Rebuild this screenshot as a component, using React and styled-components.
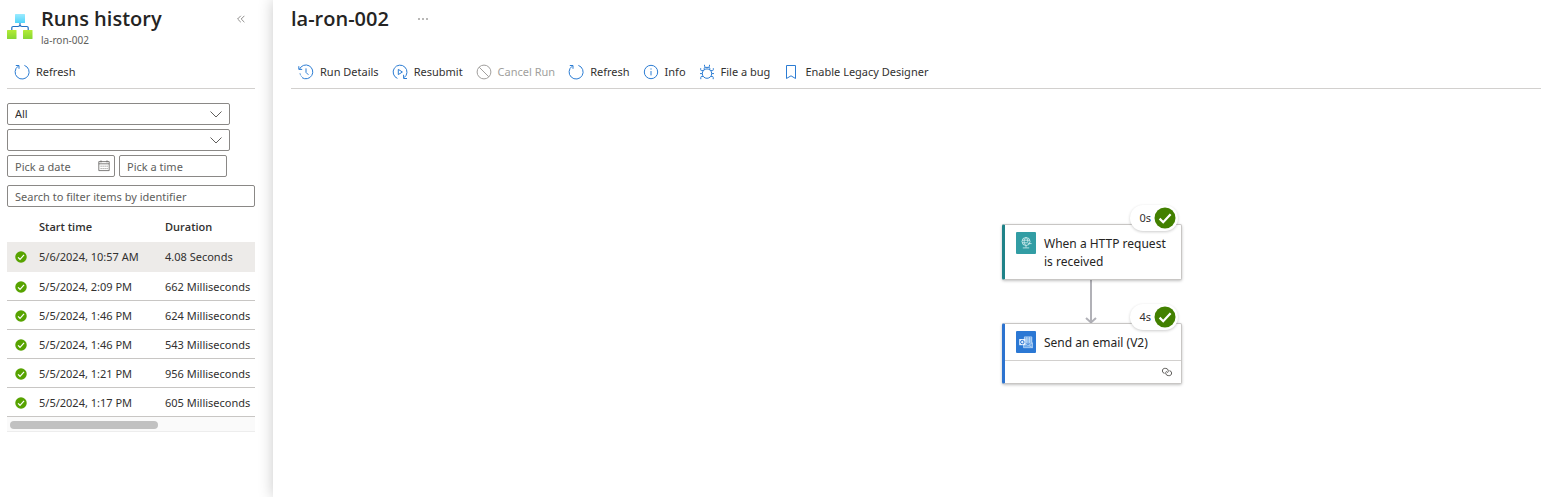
import React from 'react'
import styled, { createGlobalStyle } from 'styled-components'


const GlobalStyle = createGlobalStyle`
    *, *::before, *::after {
        box-sizing: border-box;
    }

    body {
        margin: 0;
        background: #fff;
        color: #323130;
        font-family: "Noto Sans", "Open Sans", sans-serif;
        font-size: 11px;
        line-height: 16px;
    }

    button, input, select {
        font: inherit;
        color: inherit;
    }
`

const Page = styled.div`
    display: flex;
    min-height: 100vh;
    overflow: hidden;
`

const Sidebar = styled.aside`
    flex: 0 0 273px;
    padding: 0 18px 0 7px;
`

const Main = styled.main`
    flex: 1;
    min-width: 0;
    display: flex;
    flex-direction: column;
    padding-left: 18px;
    background: #fff;
    box-shadow: 0 0 14px rgba(0, 0, 0, 0.22);
`

const Header = styled.header`
    display: flex;
    align-items: flex-start;
    gap: ${({ $gap }) => $gap}px;
    height: 56px;
    padding-top: 5px;
`

const Logo = styled.svg`
    flex: none;
    width: 26px;
    height: 26px;
    margin-top: 8px;
`

const Heading = styled.div`
    flex: ${({ $grow }) => ($grow ? 1 : 'none')};
`

const Title = styled.h1`
    margin: 0;
    font-family: "Open Sans", sans-serif;
    font-size: 20px;
    font-weight: 600;
    line-height: 28px;
    color: #252423;
    white-space: nowrap;
`

const Subtitle = styled.div`
    font-size: 10px;
    line-height: 14px;
    color: #605e5c;
`

const IconButton = styled.button`
    display: flex;
    align-items: center;
    justify-content: center;
    width: 28px;
    height: 28px;
    padding: 0;
    border: 0;
    background: none;
    color: #605e5c;
    cursor: pointer;
`

const Toolbar = styled.div`
    display: flex;
    align-items: center;
    gap: 13px;
    height: 33px;
    padding: 0 7px;
    border-bottom: 1px solid #d2d0ce;
`

const Command = styled.button`
    display: flex;
    align-items: center;
    gap: 6px;
    padding: 0;
    border: 0;
    background: none;
    white-space: nowrap;
    cursor: pointer;

    svg {
        color: #2b7cd3;
    }

    &:disabled {
        color: #a19f9d;
        cursor: default;

        svg {
            color: #a19f9d;
        }
    }
`

const Filters = styled.form`
    display: flex;
    flex-direction: column;
    gap: 4px;
    padding-top: 14px;
`

const FilterRow = styled.div`
    display: flex;
    gap: 4px;
`

const Field = styled.label`
    display: flex;
    align-items: center;
    width: ${({ $width }) => $width};
    height: 22px;
    margin-top: ${({ $spaced }) => ($spaced ? 4 : 0)}px;
    padding-right: ${({ $icon }) => ($icon ? 4 : 0)}px;
    border: 1px solid #8a8886;
    border-radius: 2px;
    color: #605e5c;
`

const Input = styled.input`
    flex: 1;
    min-width: 0;
    height: 20px;
    padding: 0 7px;
    border: 0;
    background: none;
    outline: none;

    &::placeholder {
        color: #605e5c;
        opacity: 1;
    }
`

const Select = styled.select`
    flex: 1;
    min-width: 0;
    height: 20px;
    padding: 0 7px;
    border: 0;
    appearance: none;
    background: none;
    color: #323130;
    outline: none;
`

const Chevron = styled.svg`
    flex: none;
    width: 14px;
    height: 14px;
    margin-right: 6px;
`

const Table = styled.table`
    width: 100%;
    margin-top: 6px;
    border-collapse: collapse;
    table-layout: fixed;
    white-space: nowrap;

    th {
        height: 29px;
        padding: 0 0 2px;
        font-family: "Open Sans", sans-serif;
        font-weight: 600;
        text-align: left;
    }

    td {
        height: 29px;
        padding: 2px 0 0;
    }
`

const Col = styled.col`
    width: ${({ $width }) => $width};
`

const Run = styled.tr`
    background: ${({ $selected }) => ($selected ? '#edebe9' : 'none')};
    border-bottom: 1px solid ${({ $selected }) => ($selected ? '#edebe9' : '#c8c6c4')};
`

const StatusIcon = styled.svg`
    display: block;
    width: 12px;
    height: 12px;
    margin-left: 8px;
`

const ScrollTrack = styled.div`
    height: 15px;
    padding: 4px 3px;
    background: #fafafa;
    border-bottom: 1px solid #ededed;
`

const ScrollThumb = styled.div`
    width: 61%;
    height: 8px;
    border-radius: 4px;
    background: #c1c1c1;
`

const Canvas = styled.div`
    position: relative;
    flex: 1;
    min-height: 320px;
`

const Edge = styled.svg`
    position: absolute;
    left: ${({ $x }) => $x}px;
    top: ${({ $y }) => $y}px;
    width: 12px;
    height: 44px;
`

const Node = styled.article`
    position: absolute;
    left: ${({ $x }) => $x}px;
    top: ${({ $y }) => $y}px;
    width: 180px;
    border: 1px solid #c8c6c4;
    border-left: 3px solid ${({ $color }) => $color};
    border-radius: 2px;
    background: #fff;
    box-shadow: 0 1px 3px rgba(0, 0, 0, 0.25);
`

const NodeBody = styled.div`
    display: flex;
    gap: 8px;
    padding: ${({ $compact }) => ($compact ? '7px 11px' : '7px 11px 8px')};
`

const NodeIcon = styled.svg`
    flex: none;
    width: 20px;
    height: 22px;
    border-radius: 1px;
    background: ${({ $color }) => $color};
`

const NodeTitle = styled.h2`
    margin: 0;
    padding-top: 3px;
    font-size: 12px;
    font-weight: 400;
    line-height: 18px;
    color: #252423;
`

const NodeFooter = styled.div`
    display: flex;
    justify-content: flex-end;
    align-items: center;
    height: 23px;
    padding-right: 8px;
    border-top: 1px solid #d2d0ce;
`

const Badge = styled.div`
    position: absolute;
    top: -20px;
    right: 3px;
    display: flex;
    align-items: center;
    justify-content: flex-end;
    gap: 3px;
    width: 48px;
    height: 26px;
    padding-right: 2px;
    border-radius: 13px;
    background: #fff;
    box-shadow: 0 1px 3px rgba(0, 0, 0, 0.2);
`


const Icon = ({ children, size = 16 }) => (
    <svg width={size} height={size} viewBox="0 0 16 16" fill="none" stroke="currentColor" aria-hidden="true">
        {children}
    </svg>
)

const RefreshIcon = () => (
    <Icon>
        <path d="M10.4 1.4A7 7 0 1 1 4.2 2.2" />
        <path d="M1.8 1.5H5V4.8" />
    </Icon>
)

const HistoryIcon = () => (
    <Icon>
        <path d="M1.6 5A6.9 6.9 0 1 1 4 13.6" />
        <path d="M2 9.4q.4 1.8 1.6 3.2" strokeDasharray="1.4 1" />
        <path d="M0.8 2.2V5.4h3.4M8 4.4V8.4l2.4 2.4" />
    </Icon>
)

const ResubmitIcon = () => (
    <Icon>
        <path d="M5.4 14.4A6.9 6.9 0 1 1 12 13.7" />
        <path d="M11.6 10.8v3.7h3.4M6.3 5.4v5.2L10.4 8z" />
    </Icon>
)

const CancelIcon = () => (
    <Icon>
        <circle cx="8" cy="8" r="6.9" />
        <path d="M3.2 3.2l9.6 9.6" />
    </Icon>
)

const InfoIcon = () => (
    <Icon>
        <circle cx="8" cy="8" r="6.7" />
        <path d="M8 7v4.4M8 4.4v1.2" />
    </Icon>
)

const BugIcon = () => (
    <Icon>
        <circle cx="8" cy="9.6" r="4.7" />
        <path d="M5.2 5.8V4.4q0-1 1-1h3.6q1 0 1 1v1.4M5.5 0.8v1.4l1.1 1.2M10.5 0.8v1.4L9.4 3.4" />
        <path d="M4.4 6.6H2.6q-.9 0-.9-.9V4.2M11.6 6.6h1.8q.9 0 .9-.9V4.2M3.3 9.6H1M12.7 9.6H15M4 12.4H2.8q-1 0-1 1v1.8M12 12.4h1.2q1 0 1 1v1.8" />
    </Icon>
)

const BookmarkIcon = () => (
    <Icon>
        <path d="M3.5 1.5h9v13L8 11.8l-4.5 2.7z" />
    </Icon>
)

const CalendarIcon = () => (
    <svg width="12" height="12" viewBox="0 0 12 12" fill="none" stroke="currentColor" strokeWidth="0.8" aria-hidden="true">
        <path d="M0.8 1.6h10.4v9H0.8zM0.8 3.8h10.4M3 0.4v2M9 0.4v2" />
        <path d="M2.6 6.2h7M2.6 8.6h7" strokeDasharray="1 1" />
    </svg>
)

const LinkIcon = () => (
    <svg width="12" height="10" viewBox="0 0 12 10" fill="none" stroke="#605e5c" aria-hidden="true">
        <path d="M3.6 6.3A2.5 2.5 0 0 1 3.2 1.4h1.6a2.5 2.5 0 0 1 1.6 4.4" />
        <path d="M8.4 3.7a2.5 2.5 0 0 1 .4 4.9H7.2A2.5 2.5 0 0 1 5.6 4.2" />
    </svg>
)

const DropdownArrow = () => (
    <Chevron viewBox="0 0 14 14" fill="none" stroke="#605e5c" aria-hidden="true">
        <path d="M1.5 4.5L7 10l5.5-5.5" />
    </Chevron>
)

const LogicAppLogo = () => (
    <Logo viewBox="0 0 26 26" aria-hidden="true">
        <defs>
            <linearGradient id="logo-top" x1="0" y1="0" x2="0" y2="1">
                <stop offset="0" stopColor="#9cebff" />
                <stop offset="1" stopColor="#50d4fa" />
            </linearGradient>
            <linearGradient id="logo-leaf" x1="0" y1="0" x2="0" y2="1">
                <stop offset="0" stopColor="#b4ec36" />
                <stop offset="1" stopColor="#86d633" />
            </linearGradient>
        </defs>
        <path d="M13 9v3.5M4.8 17v-2.2q0-1.3 1.3-1.3h4.6q1.6 0 2.3-1.6q.7 1.6 2.3 1.6h4.6q1.3 0 1.3 1.3V17" fill="none" stroke="#1f6fc5" strokeWidth="1.2" />
        <rect x="8" y="1" width="10" height="9" rx="0.5" fill="url(#logo-top)" />
        <rect x="0" y="17" width="9.5" height="9" rx="0.5" fill="url(#logo-leaf)" />
        <rect x="16" y="17" width="9.5" height="9" rx="0.5" fill="url(#logo-leaf)" />
    </Logo>
)

const CheckCircle = ({ color = '#57a300' }) => (
    <>
        <circle cx="11" cy="11" r="10.5" fill={color} />
        <path d="M5.6 11.6l3.6 3.6 7.4-8" fill="none" stroke="#fff" strokeWidth="2.2" />
    </>
)

const HttpGlyph = () => (
    <g fill="none" stroke="#d8f0f1" strokeWidth="0.8">
        <circle cx="10" cy="9.5" r="4" />
        <path d="M6.2 8.2h7.6M6.2 10.8h5.4M10 5.5c-2.4 2.4-2.4 5.6 0 8M10 5.5c1.6 1.4 2 3 1.8 5M10 13.5v2M6.8 15.9h6.4M12 11.6h3.6" />
    </g>
)

const OutlookGlyph = () => (
    <>
        <path d="M8 6h8v6H8z" fill="#5f9fe4" />
        <path d="M8.4 5.9h7.4v6.2H8.4zM10.8 6v6M13.4 6v6M8.4 8h7.4M8.4 10h7.4" fill="none" stroke="#d6e8fb" strokeWidth="0.7" />
        <path d="M7.5 11.8l4.6 2.6 4.4-2.6v4.9h-9z" fill="#72acea" stroke="#d6e8fb" strokeWidth="0.6" />
        <path d="M12.6 14.2l3.8 2.4" stroke="#d6e8fb" strokeWidth="0.6" />
        <rect x="3.2" y="8" width="6.2" height="6.2" fill="#e5f1fd" />
        <circle cx="6.3" cy="11.1" r="1.7" fill="none" stroke="#2772d2" />
    </>
)


const commands = [
    { label: 'Run Details', icon: HistoryIcon },
    { label: 'Resubmit', icon: ResubmitIcon },
    { label: 'Cancel Run', icon: CancelIcon, disabled: true },
    { label: 'Refresh', icon: RefreshIcon },
    { label: 'Info', icon: InfoIcon },
    { label: 'File a bug', icon: BugIcon },
    { label: 'Enable Legacy Designer', icon: BookmarkIcon },
]

const runs = [
    { start: '5/6/2024, 10:57 AM', duration: '4.08 Seconds' },
    { start: '5/5/2024, 2:09 PM', duration: '662 Milliseconds' },
    { start: '5/5/2024, 1:46 PM', duration: '624 Milliseconds' },
    { start: '5/5/2024, 1:46 PM', duration: '543 Milliseconds' },
    { start: '5/5/2024, 1:21 PM', duration: '956 Milliseconds' },
    { start: '5/5/2024, 1:17 PM', duration: '605 Milliseconds' },
]

const steps = [
    { title: 'When a HTTP request is received', time: '0s', x: 711, y: 135, color: '#1f8288', iconColor: '#329da4', glyph: HttpGlyph },
    { title: 'Send an email (V2)', time: '4s', x: 711, y: 234, color: '#2c73cf', iconColor: '#2b78d4', glyph: OutlookGlyph, linked: true },
]


const RunsHistory = () => (
    <Sidebar>
        <Header $gap={8}>
            <LogicAppLogo />
            <Heading $grow>
                <Title>Runs history</Title>
                <Subtitle>la-ron-002</Subtitle>
            </Heading>
            <IconButton type="button" aria-label="Collapse">
                <svg width="8" height="8" viewBox="0 0 8 8" fill="none" stroke="currentColor" strokeWidth="0.7">
                    <path d="M3.8 0.8L0.6 4l3.2 3.2M7.4 0.8L4.2 4l3.2 3.2" />
                </svg>
            </IconButton>
        </Header>
        <Toolbar>
            <Command type="button"><RefreshIcon />Refresh</Command>
        </Toolbar>

        <Filters>
            <Field $width="223px">
                <Select aria-label="Status" defaultValue="all">
                    <option value="all">All</option>
                </Select>
                <DropdownArrow />
            </Field>
            <Field $width="223px">
                <Select aria-label="Time range" defaultValue="">
                    <option value=""></option>
                </Select>
                <DropdownArrow />
            </Field>
            <FilterRow>
                <Field $width="108px" $icon>
                    <Input type="text" aria-label="Date" placeholder="Pick a date" />
                    <CalendarIcon />
                </Field>
                <Field $width="108px">
                    <Input type="text" aria-label="Time" placeholder="Pick a time" />
                </Field>
            </FilterRow>
            <Field $width="100%" $spaced>
                <Input type="text" aria-label="Search" placeholder="Search to filter items by identifier" />
            </Field>
        </Filters>

        <Table>
            <colgroup>
                <Col $width="32px" />
                <Col $width="126px" />
                <Col />
            </colgroup>
            <thead>
                <tr>
                    <th aria-label="Status" />
                    <th>Start time</th>
                    <th>Duration</th>
                </tr>
            </thead>
            <tbody>
                {runs.map((run, i) => (
                    <Run key={i} $selected={i === 0}>
                        <td>
                            <StatusIcon viewBox="0 0 22 22" role="img" aria-label="Succeeded">
                                <CheckCircle />
                            </StatusIcon>
                        </td>
                        <td>{run.start}</td>
                        <td>{run.duration}</td>
                    </Run>
                ))}
            </tbody>
        </Table>
        <ScrollTrack>
            <ScrollThumb />
        </ScrollTrack>
    </Sidebar>
)

const Step = ({ step }) => {
    const Glyph = step.glyph
    return (
        <Node $x={step.x} $y={step.y} $color={step.color}>
            <NodeBody $compact={step.linked}>
                <NodeIcon viewBox="0 0 20 22" $color={step.iconColor} aria-hidden="true">
                    <Glyph />
                </NodeIcon>
                <NodeTitle>{step.title}</NodeTitle>
            </NodeBody>
            {step.linked && <NodeFooter><LinkIcon /></NodeFooter>}
            <Badge>
                {step.time}
                <svg width="22" height="22" viewBox="0 0 22 22" role="img" aria-label="Succeeded">
                    <CheckCircle color="#428000" />
                </svg>
            </Badge>
        </Node>
    )
}

const App = () => {
    return (
        <>
            <GlobalStyle />
            <Page>
                <RunsHistory />
                <Main>
                    <Header $gap={20}>
                        <Heading>
                            <Title as="h2">la-ron-002</Title>
                        </Heading>
                        <IconButton type="button" aria-label="More">
                            <svg width="12" height="4" viewBox="0 0 12 4" fill="currentColor">
                                <circle cx="2" cy="2" r="0.8" />
                                <circle cx="6" cy="2" r="0.8" />
                                <circle cx="10" cy="2" r="0.8" />
                            </svg>
                        </IconButton>
                    </Header>
                    <Toolbar>
                        {commands.map(({ label, icon: CommandIcon, disabled }) => (
                            <Command key={label} type="button" disabled={disabled}>
                                <CommandIcon />
                                {label}
                            </Command>
                        ))}
                    </Toolbar>
                    <Canvas>
                        <Edge $x={794} $y={191} viewBox="0 0 12 44" fill="none" stroke="#b1b1b7" strokeWidth="2" aria-hidden="true">
                            <path d="M6 0v42M1 38l5 4.5L11 38" />
                        </Edge>
                        {steps.map(step => (
                            <Step key={step.title} step={step} />
                        ))}
                    </Canvas>
                </Main>
            </Page>
        </>
    )
}

export default App
